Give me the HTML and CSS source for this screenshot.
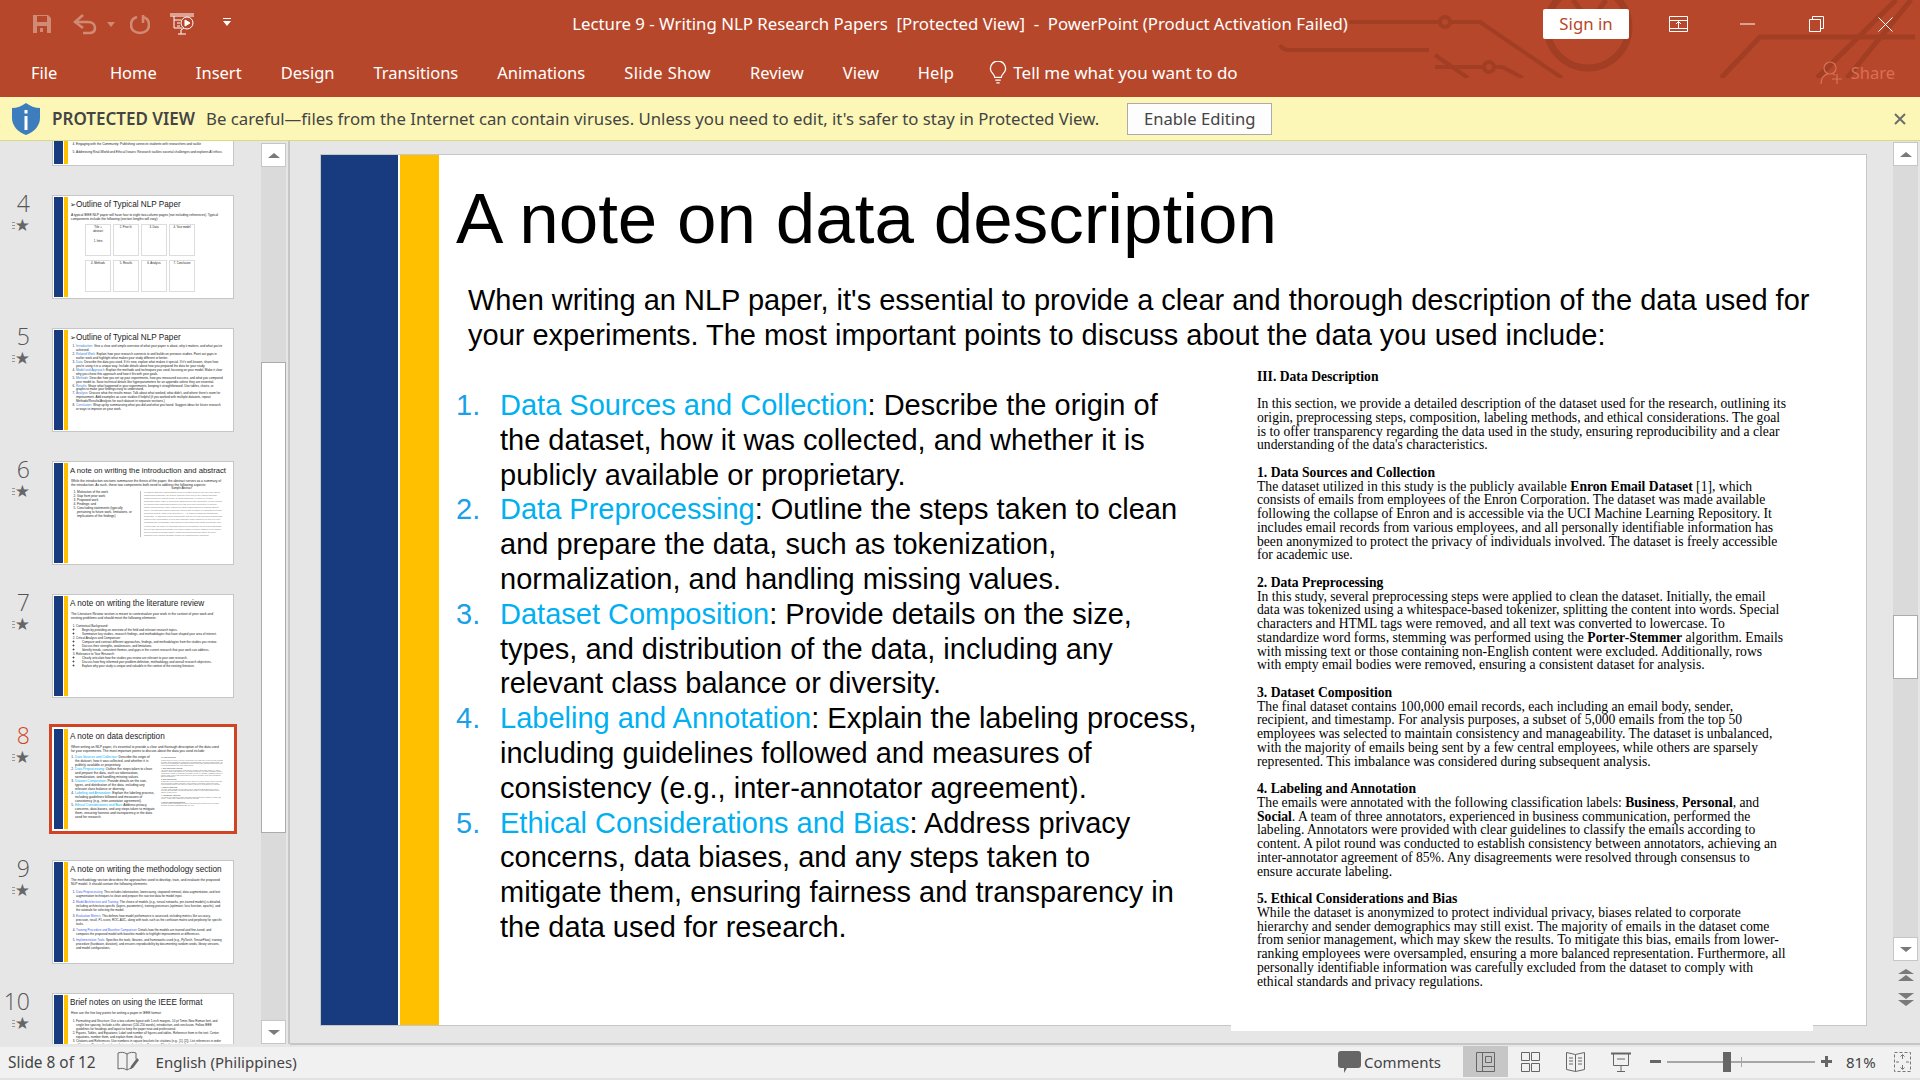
FILE: index.html
```html
<!DOCTYPE html>
<html>
<head>
<meta charset="utf-8">
<title>Lecture 9 - Writing NLP Research Papers</title>
<link rel="stylesheet" href="styles.css">
</head>
<body>
<div class="app">

	<!-- title bar and tabs -->
	<header class="top">
		<svg class="circuit" width="1920" height="78" viewBox="0 0 1920 78" fill="none" stroke="#a13e24" stroke-width="4">
			<path d="M1280 45q3 5 8 5H1429M1349 22H1440M1450 22H1480L1562 78M1435 55L1468 78M1435 67H1484M1494 67H1500q4 0 8 3L1523 78"/>
			<circle cx="1445" cy="22" r="5"/>
			<circle cx="1489" cy="67" r="5"/>
			<circle cx="1588" cy="27" r="41" stroke-width="7"/>
			<path d="M1573 0L1590 22L1606 0M1600 12V22" stroke-width="5"/>
			<path d="M1721 78L1760 37H1915M1817 78L1896 0M1847 78L1911 0" stroke-width="5"/>
		</svg>
		<div class="titlebar">
			<div class="qat">
				<svg class="ico-save" width="20" height="20" viewBox="0 0 20 20"><path d="M1 1H16L19 4V19H1Z" fill="#d08a75"/><path d="M5 2H15V8H5ZM5 12H15V19H5Z" fill="#b7472a"/><path d="M8 14H11V18H8Z" fill="#d08a75"/></svg>
				<svg class="ico-undo" width="24" height="21" viewBox="0 0 24 21" fill="none" stroke="#d08a75" stroke-width="2.6"><path d="M10 1L2 8L10 14"/><path d="M3 8H15C20 8 22 11 22 14C22 17 20 19 16 19H10"/></svg>
				<svg class="ico-drop" width="8" height="5" viewBox="0 0 8 5"><path d="M0 0H8L4 5Z" fill="#d08a75"/></svg>
				<svg class="ico-redo" width="20" height="21" viewBox="0 0 20 21" fill="none" stroke="#d08a75" stroke-width="2.6"><path d="M7 3C3 4 1 7 1 11C1 16 5 19 10 19C15 19 19 16 19 11C19 7 17 4 13 3"/><path d="M13 1V9"/></svg>
				<svg class="ico-show" width="26" height="22" viewBox="0 0 26 22" fill="none" stroke="#fff" stroke-width="1"><path d="M0 1H24M0 3H24" /><path d="M4 3V15H12M4 7H11M7 10H10M7 13H10"/><circle cx="17" cy="10" r="6"/><path d="M15 7L20 10L15 13Z" fill="#fff"/><path d="M11 17V21M8 21H16M11 17L14 15"/></svg>
				<svg class="ico-more" width="8" height="9" viewBox="0 0 8 9"><path d="M0 0H8V1H0ZM0 3H8L4 8Z" fill="#fff"/></svg>
			</div>
			<div class="doc-title">Lecture 9 - Writing NLP Research Papers&nbsp; [Protected View]&nbsp; -&nbsp; PowerPoint (Product Activation Failed)</div>
			<div class="win">
				<button class="signin">Sign in</button>
				<div class="win-btn"><svg width="19" height="16" viewBox="0 0 19 16" fill="none" stroke="#fff"><path d="M.5.5H18.5V15.5H.5ZM.5 4.5H18.5M.5 12.5H18.5M9.5 12V6M7 8L9.5 5.5L12 8"/></svg></div>
				<div class="win-btn"><svg width="15" height="2" viewBox="0 0 15 2"><path d="M0 1H15" stroke="#fff"/></svg></div>
				<div class="win-btn"><svg width="15" height="16" viewBox="0 0 15 16" fill="none" stroke="#fff"><path d="M.5 3.5H11.5V15.5H.5ZM3.5 3.5V.5H14.5V12.5H11.5"/></svg></div>
				<div class="win-btn"><svg width="15" height="15" viewBox="0 0 15 15" fill="none" stroke="#fff"><path d="M.5.5L14.5 14.5M14.5.5L.5 14.5"/></svg></div>
			</div>
		</div>
		<nav class="tabs">
			<span class="tab tab-file">File</span>
			<span class="tab">Home</span>
			<span class="tab">Insert</span>
			<span class="tab">Design</span>
			<span class="tab">Transitions</span>
			<span class="tab">Animations</span>
			<span class="tab tab-show">Slide Show</span>
			<span class="tab">Review</span>
			<span class="tab">View</span>
			<span class="tab">Help</span>
			<span class="tell">
				<svg width="18" height="24" viewBox="0 0 16 22" fill="none" stroke="#fff" stroke-width="1.2"><path d="M5 15C5 12 1 11 1 7A7 7 0 0 1 15 7C15 11 11 12 11 15ZM5.500 17.500H10.500M6.500 20H9.500"/></svg>
				Tell me what you want to do
			</span>
			<span class="share">
				<svg width="23" height="24" viewBox="0 0 23 24" fill="none" stroke="#d4745a" stroke-width="1.2"><circle cx="10" cy="7" r="6"/><path d="M1 23C1 17 4 14 8 13M13 13L15 14M17 13V23M12 18H22"/></svg>
				Share
			</span>
		</nav>
	</header>

	<!-- protected view -->
	<div class="protect">
		<svg width="28" height="32" viewBox="0 0 28 32"><path d="M14 0C18 3 23 5 28 5V15C28 23 22 29 14 32C6 29 0 23 0 15V5C5 5 10 3 14 0Z" fill="#3e7dbd"/><path d="M12.500 13H15.500V27H12.500ZM12.500 7H15.500V10.500H12.500Z" fill="#fff"/></svg>
		<b>PROTECTED VIEW</b>
		<span class="protect-msg">Be careful—files from the Internet can contain viruses. Unless you need to edit, it's safer to stay in Protected View.</span>
		<button class="enable">Enable Editing</button>
		<svg class="protect-x" width="12" height="12" viewBox="0 0 12 12"><path d="M1 1L11 11M11 1L1 11" stroke="#6d6d6d" stroke-width="2"/></svg>
	</div>

	<div class="work">

		<!-- slide thumbnails -->
		<aside class="panel">
			<div class="thumb-list">

				<div class="row">
					<div class="side"></div>
					<div class="thumb"><i class="blue"></i><i class="gold"></i>
						<div class="tbody">
							<ol class="t-list t-plain t-tail" start="4">
								<li>Engaging with the Community: Publishing connects students with researchers and tackle</li>
							</ol>
							<ol class="t-list t-plain t-gap" start="5">
								<li>Addressing Real-World and Ethical Issues: Research tackles societal challenges and explores AI ethics.</li>
							</ol>
						</div>
					</div>
				</div>

				<div class="row">
					<div class="side"><span class="num">4</span><span class="star">★</span></div>
					<div class="thumb"><i class="blue"></i><i class="gold"></i>
						<div class="tbody">
							<h4><span class="arrow">➢</span>Outline of Typical NLP Paper</h4>
							<p class="t-intro">A typical IEEE NLP paper will have four to eight two-column pages (not including references). Typical components include the following (section lengths will vary):</p>
							<div class="pages">
								<div class="page">Title +<br>abstract<br><br><br>1. Intro</div>
								<div class="page">2. Prior lit.</div>
								<div class="page">3. Data</div>
								<div class="page">4. Your model</div>
								<div class="page">4. Methods</div>
								<div class="page">5. Results</div>
								<div class="page">6. Analysis</div>
								<div class="page">7. Conclusion</div>
							</div>
						</div>
					</div>
				</div>

				<div class="row">
					<div class="side"><span class="num">5</span><span class="star">★</span></div>
					<div class="thumb"><i class="blue"></i><i class="gold"></i>
						<div class="tbody">
							<h4><span class="arrow">➢</span>Outline of Typical NLP Paper</h4>
							<ol class="t-list t-tight">
								<li><em>Introduction:</em> Give a clear and simple overview of what your paper is about, why it matters, and what you've achieved.</li>
								<li><em>Related Work:</em> Explain how your research connects to and builds on previous studies. Point out gaps in earlier work and highlight what makes your study different or better.</li>
								<li><em>Data:</em> Describe the data you used. If it's new, explain what makes it special. If it's well-known, share how you're using it in a unique way. Include details about how you prepared the data for your study.</li>
								<li><em>Model and Approach:</em> Explain the methods and techniques you used, focusing on your model. Make it clear why you chose this approach and how it fits with your goals.</li>
								<li><em>Methods:</em> Describe how you set up your experiments, how you measured success, and what you compared your model to. Save technical details like hyperparameters for an appendix unless they are essential.</li>
								<li><em>Results:</em> Share what happened in your experiments, keeping it straightforward. Use tables, charts, or graphs to make your findings easy to understand.</li>
								<li><em>Analysis:</em> Discuss what the results mean. Talk about what worked, what didn't, and where there's room for improvement. Add examples as case studies if helpful (if you worked with multiple datasets, repeat Methods/Results/Analysis for each dataset in separate sections.)</li>
								<li><em>Conclusion:</em> Wrap up by summarizing what you did and what you found. Suggest ideas for future research or ways to improve on your work.</li>
							</ol>
						</div>
					</div>
				</div>

				<div class="row">
					<div class="side"><span class="num">6</span><span class="star">★</span></div>
					<div class="thumb"><i class="blue"></i><i class="gold"></i>
						<div class="tbody">
							<h4 class="t-small">A note on writing the introduction and abstract</h4>
							<p class="t-intro">While the introduction sections summarize the thesis of the paper, the abstract serves as a summary of the introduction. As such, these two components both need to address the following aspects:</p>
							<div class="t-cols">
								<ol class="t-list t-plain t-left">
									<li>Motivation of the work</li>
									<li>Gap from prior work</li>
									<li>Proposed work</li>
									<li>Findings; and</li>
									<li>Concluding statements (typically pertaining to future work, limitations, or implications of the findings)</li>
								</ol>
								<div class="t-abstract">
									<div class="t-abs-head">Sample Abstract</div>
									<p>[1] Natural language understanding involves reading between the lines with implicit background knowledge. [2] Current systems either rely on pre-trained language models as the sole implicit source of world knowledge, or resort to external knowledge bases (KBs) to incorporate additional relevant knowledge. [3] We propose an unsupervised framework based on self-talk as a novel alternative to multiple-choice commonsense tasks. Inspired by inquiry-based discovery learning (Bruner, 1961), our approach inquires language models with a number of information seeking questions such as "what is the definition of ..." to discover additional background knowledge. [4] Empirical results demonstrate that the self-talk procedure substantially improves the performance of zero-shot language model baselines on four out of six commonsense benchmarks, and competes with models that obtain knowledge from external KBs. [5] While our approach improves performance on several benchmarks, the self-talk induced knowledge even when leading to correct answers is not always seen as helpful by human judges, raising interesting questions about the inner-workings of pre-trained language models for commonsense reasoning.</p>
								</div>
							</div>
						</div>
					</div>
				</div>

				<div class="row">
					<div class="side"><span class="num">7</span><span class="star">★</span></div>
					<div class="thumb"><i class="blue"></i><i class="gold"></i>
						<div class="tbody">
							<h4>A note on writing the literature review</h4>
							<p class="t-intro">The Literature Review section is meant to contextualize your work in the context of prior work and existing problems and should meet the following elements:</p>
							<ol class="t-list t-plain t-outer">
								<li>Contextual Background:
									<ul><li>Begin by providing an overview of the field and relevant research topics.</li><li>Summarize key studies, research findings, and methodologies that have shaped your area of interest.</li></ul>
								</li>
								<li>Critical Analysis and Comparison:
									<ul><li>Compare and contrast different approaches, findings, and methodologies from the studies you review.</li><li>Discuss their strengths, weaknesses, and limitations.</li><li>Identify trends, consistent themes, and gaps in the current research that your work can address.</li></ul>
								</li>
								<li>Relevance to Your Research:
									<ul><li>Clearly articulate how the studies you review are relevant to your own research.</li><li>Discuss how they informed your problem definition, methodology, and overall research objectives.</li><li>Explain why your study is unique and valuable in the context of the existing literature.</li></ul>
								</li>
							</ol>
						</div>
					</div>
				</div>

				<div class="row">
					<div class="side"><span class="num num-on">8</span><span class="star">★</span></div>
					<div class="thumb thumb-on"><i class="blue"></i><i class="gold"></i>
						<div class="tbody">
							<h4>A note on data description</h4>
							<p class="t-intro">When writing an NLP paper, it's essential to provide a clear and thorough description of the data used for your experiments. The most important points to discuss about the data you used include:</p>
							<div class="t-cols t-cols8">
								<ol class="t-list t-eight">
									<li><em>Data Sources and Collection:</em> Describe the origin of the dataset, how it was collected, and whether it is publicly available or proprietary.</li>
									<li><em>Data Preprocessing:</em> Outline the steps taken to clean and prepare the data, such as tokenization, normalization, and handling missing values.</li>
									<li><em>Dataset Composition:</em> Provide details on the size, types, and distribution of the data, including any relevant class balance or diversity.</li>
									<li><em>Labeling and Annotation:</em> Explain the labeling process, including guidelines followed and measures of consistency (e.g., inter-annotator agreement).</li>
									<li><em>Ethical Considerations and Bias:</em> Address privacy concerns, data biases, and any steps taken to mitigate them, ensuring fairness and transparency in the data used for research.</li>
								</ol>
								<div class="t-paper">
									<b>III. Data Description</b><br><br>
									In this section, we provide a detailed description of the dataset used for the research, outlining its origin, preprocessing steps, composition, labeling methods, and ethical considerations. The goal is to offer transparency regarding the data used in the study, ensuring reproducibility and a clear understanding of the data's characteristics.<br><br>
									<b>1. Data Sources and Collection</b><br>
									The dataset utilized in this study is the publicly available Enron Email Dataset [1], which consists of emails from employees of the Enron Corporation. The dataset was made available following the collapse of Enron and is accessible via the UCI Machine Learning Repository. It includes email records from various employees, and all personally identifiable information has been anonymized.<br><br>
									<b>2. Data Preprocessing</b><br>
									In this study, several preprocessing steps were applied to clean the dataset. Initially, the email data was tokenized using a whitespace-based tokenizer, splitting the content into words. Special characters and HTML tags were removed, and all text was converted to lowercase.<br><br>
									<b>3. Dataset Composition</b><br>
									The final dataset contains 100,000 email records, each including an email body, sender, recipient, and timestamp. For analysis purposes, a subset of 5,000 emails from the top 50 employees was selected.<br><br>
									<b>4. Labeling and Annotation</b><br>
									The emails were annotated with the following classification labels: Business, Personal, and Social. A team of three annotators performed the labeling.<br><br>
									<b>5. Ethical Considerations and Bias</b><br>
									While the dataset is anonymized to protect individual privacy, biases related to corporate hierarchy and sender demographics may still exist.
								</div>
							</div>
						</div>
					</div>
				</div>

				<div class="row">
					<div class="side"><span class="num">9</span><span class="star">★</span></div>
					<div class="thumb"><i class="blue"></i><i class="gold"></i>
						<div class="tbody">
							<h4>A note on writing the methodology section</h4>
							<p class="t-intro">The methodology section describes the approaches used to develop, train, and evaluate the proposed NLP model. It should contain the following elements:</p>
							<ol class="t-list t-nine">
								<li><em>Data Preprocessing:</em> This includes tokenization, lowercasing, stopword removal, data augmentation, and text augmentation techniques to clean and prepare the raw text data for model input.</li>
								<li><em>Model Architecture and Training:</em> The choice of models (e.g., neural networks, pre-trained models) is detailed, including architecture-specific (layers, parameters), training processes (optimizer, loss function, epochs), and the rationale for selecting the model.</li>
								<li><em>Evaluation Metrics:</em> This defines how model performance is assessed, including metrics like accuracy, precision, recall, F1-score, ROC-AUC, along with tools such as the confusion matrix and perplexity for specific tasks.</li>
								<li><em>Training Procedure and Baseline Comparison:</em> Details how the models are trained and fine-tuned, and compares the proposed model with baseline models to highlight improvements or differences.</li>
								<li><em>Implementation Tools:</em> Specifies the tools, libraries, and frameworks used (e.g., PyTorch, TensorFlow), training procedure (hardware, duration), and ensures reproducibility by documenting random seeds, library versions, and model configurations.</li>
							</ol>
						</div>
					</div>
				</div>

				<div class="row">
					<div class="side"><span class="num">10</span><span class="star">★</span></div>
					<div class="thumb"><i class="blue"></i><i class="gold"></i>
						<div class="tbody">
							<h4>Brief notes on using the IEEE format</h4>
							<p class="t-intro">Here are the five key points for writing a paper in IEEE format:</p>
							<ol class="t-list t-plain t-outer">
								<li>Formatting and Structure: Use a two-column layout with 1-inch margins, 10 pt Times New Roman font, and single line spacing. Include a title, abstract (150-250 words), introduction, and conclusion. Follow IEEE guidelines for headings and layout to keep the paper neat and professional.</li>
								<li>Figures, Tables, and Equations: Label and number all figures and tables. Reference them in the text. Center equations, number them, and explain them clearly.</li>
								<li>Citations and References: Use numbers in square brackets for citations (e.g., [1], [2]). List references in order of first use. Review the style guide to avoid mistakes. If you use AI tools, mention them in the acknowledgements.</li>
							</ol>
						</div>
					</div>
				</div>

			</div>
			<div class="scroll scroll-left">
				<div class="sbtn"><span class="tri-up"></span></div>
				<div class="strack"><div class="sthumb"></div></div>
				<div class="sbtn"><span class="tri-down"></span></div>
			</div>
		</aside>

		<!-- current slide -->
		<main class="editor">
			<section class="slide">
				<div class="band-blue"></div>
				<div class="band-gold"></div>
				<div class="slide-main">
					<h1>A note on data description</h1>
					<p class="intro">When writing an NLP paper, it's essential to provide a clear and thorough description of the data used for your experiments. The most important points to discuss about the data you used include:</p>
					<div class="columns">
						<ol class="points">
							<li><div><span class="hl">Data Sources and Collection</span>: Describe the origin of the dataset, how it was collected, and whether it is publicly available or proprietary.</div></li>
							<li><div><span class="hl">Data Preprocessing</span>: Outline the steps taken to clean and prepare the data, such as tokenization, normalization, and handling missing values.</div></li>
							<li><div><span class="hl">Dataset Composition</span>: Provide details on the size, types, and distribution of the data, including any relevant class balance or diversity.</div></li>
							<li><div><span class="hl">Labeling and Annotation</span>: Explain the labeling process, including guidelines followed and measures of consistency (e.g., inter-annotator agreement).</div></li>
							<li><div><span class="hl">Ethical Considerations and Bias</span>: Address privacy concerns, data biases, and any steps taken to<br>mitigate them, ensuring fairness and transparency in the data used for research.</div></li>
						</ol>
						<div class="paper">
<b>III. Data Description</b><br>
<br>
In this section, we provide a detailed description of the dataset used for the research, outlining its<br>
origin, preprocessing steps, composition, labeling methods, and ethical considerations. The goal<br>
is to offer transparency regarding the data used in the study, ensuring reproducibility and a clear<br>
understanding of the data's characteristics.<br>
<br>
<b>1. Data Sources and Collection</b><br>
The dataset utilized in this study is the publicly available <b>Enron Email Dataset</b> [1], which<br>
consists of emails from employees of the Enron Corporation. The dataset was made available<br>
following the collapse of Enron and is accessible via the UCI Machine Learning Repository. It<br>
includes email records from various employees, and all personally identifiable information has<br>
been anonymized to protect the privacy of individuals involved. The dataset is freely accessible<br>
for academic use.<br>
<br>
<b>2. Data Preprocessing</b><br>
In this study, several preprocessing steps were applied to clean the dataset. Initially, the email<br>
data was tokenized using a whitespace-based tokenizer, splitting the content into words. Special<br>
characters and HTML tags were removed, and all text was converted to lowercase. To<br>
standardize word forms, stemming was performed using the <b>Porter-Stemmer</b> algorithm. Emails<br>
with missing text or those containing non-English content were excluded. Additionally, rows<br>
with empty email bodies were removed, ensuring a consistent dataset for analysis.<br>
<br>
<b>3. Dataset Composition</b><br>
The final dataset contains 100,000 email records, each including an email body, sender,<br>
recipient, and timestamp. For analysis purposes, a subset of 5,000 emails from the top 50<br>
employees was selected to maintain consistency and manageability. The dataset is unbalanced,<br>
with the majority of emails being sent by a few central employees, while others are sparsely<br>
represented. This imbalance was considered during subsequent analysis.<br>
<br>
<b>4. Labeling and Annotation</b><br>
The emails were annotated with the following classification labels: <b>Business</b>, <b>Personal</b>, and<br>
<b>Social</b>. A team of three annotators, experienced in business communication, performed the<br>
labeling. Annotators were provided with clear guidelines to classify the emails according to<br>
content. A pilot round was conducted to establish consistency between annotators, achieving an<br>
inter-annotator agreement of 85%. Any disagreements were resolved through consensus to<br>
ensure accurate labeling.<br>
<br>
<b>5. Ethical Considerations and Bias</b><br>
While the dataset is anonymized to protect individual privacy, biases related to corporate<br>
hierarchy and sender demographics may still exist. The majority of emails in the dataset come<br>
from senior management, which may skew the results. To mitigate this bias, emails from lower-<br>
ranking employees were oversampled, ensuring a more balanced representation. Furthermore, all<br>
personally identifiable information was carefully excluded from the dataset to comply with<br>
ethical standards and privacy regulations.
						</div>
					</div>
				</div>
			</section>
			<div class="scroll scroll-right">
				<div class="sbtn"><span class="tri-up"></span></div>
				<div class="strack"><div class="sthumb"></div></div>
				<div class="sbtn"><span class="tri-down"></span></div>
				<div class="jump">
					<svg width="16" height="14" viewBox="0 0 16 14"><path d="M8 0L16 5H0ZM8 6L16 12H0Z" fill="#7a7a7a"/></svg>
					<svg width="16" height="14" viewBox="0 0 16 14"><path d="M0 0H16L8 6ZM0 7H16L8 13Z" fill="#7a7a7a"/></svg>
				</div>
			</div>
		</main>
	</div>

	<!-- status bar -->
	<footer class="status">
		<span class="st-slide">Slide 8 of 12</span>
		<svg class="st-notes" width="22" height="22" viewBox="0 0 22 22" fill="none" stroke="#666"><path d="M1 2C4 1 7 1 10 3V19C7 17 4 17 1 18ZM10 3C13 1 16 1 19 2V8M10 19C12 18 14 17 15 17"/><path d="M14 15L20 7L22 9L16 17L13 18Z" fill="#666" stroke="none"/></svg>
		<span class="st-lang">English (Philippines)</span>
		<span class="st-comments">
			<svg width="23" height="23" viewBox="0 0 23 23"><path d="M3 1H20Q23 1 23 4V15Q23 18 20 18H9L6 23V18H3Q0 18 0 15V4Q0 1 3 1Z" fill="#666"/></svg>
			Comments
		</span>
		<span class="view view-on"><svg width="19" height="20" viewBox="0 0 19 20" fill="none" stroke="#666"><path d="M.5.5H18.5V19.500H.5ZM6.500.5V19.500M6.500 14.500H18.500M9.500 4.500H15.500V10.500H9.500Z"/></svg></span>
		<span class="view"><svg width="19" height="20" viewBox="0 0 19 20" fill="none" stroke="#666"><path d="M.5.5H8.500V8.500H.5ZM10.500.5H18.500V8.500H10.500ZM.5 11.500H8.500V19.500H.5ZM10.500 11.500H18.500V19.500H10.500Z"/></svg></span>
		<span class="view"><svg width="19" height="20" viewBox="0 0 19 20" fill="none" stroke="#666"><path d="M.5.5L9.500 2.500L18.500.5V17.500L9.500 19.500L.5 17.500ZM9.500 2.500V19.500M3 6H7M3 9H7M3 12H7M12 6H16M12 9H16M12 12H16"/></svg></span>
		<span class="view"><svg width="20" height="20" viewBox="0 0 20 20" fill="none" stroke="#666"><path d="M0 1.500H20" stroke-width="2"/><path d="M2.500 2V13.500H17.500V2M6 7H14M10 14V19M6 19.500H14"/></svg></span>
		<span class="zoom-minus"></span>
		<span class="slider"><span class="slider-tick"></span><span class="slider-knob"></span></span>
		<span class="zoom-plus"></span>
		<span class="st-zoom">81%</span>
		<svg class="st-fit" width="17" height="20" viewBox="0 0 17 20" fill="none" stroke="#777"><path d="M.5.5H16.500V19.500H.5Z" stroke-dasharray="3 2"/><path d="M8.500 3V7M6.500 4.500L8.500 2.500L10.500 4.500M8.500 13V17M6.500 15.500L8.500 17.500L10.500 15.500M2 10H5M12 10H15"/></svg>
	</footer>
</div>
</body>
</html>
```

FILE: styles.css
```css
html, body {
	margin: 0;
	height: 100%;
	overflow: hidden;
}
body {
	font-family: "Noto Sans", "Open Sans", sans-serif;
	background: #e6e6e6;
}
.app {
	width: 1920px;
	height: 1080px;
	display: flex;
	flex-direction: column;
}
button {
	font-family: inherit;
}

/* title bar */
.top {
	position: relative;
	height: 97px;
	flex: none;
	background: #b7472a;
	color: #fff;
}
.circuit {
	position: absolute;
	left: 0;
	top: 0;
}
.titlebar {
	position: relative;
	height: 48px;
	display: flex;
	align-items: center;
}
.qat {
	width: 400px;
	display: flex;
	align-items: center;
	padding-left: 32px;
	box-sizing: border-box;
}
.ico-undo { margin-left: 21px; }
.ico-drop { margin-left: 10px; }
.ico-redo { margin-left: 15px; }
.ico-show { margin-left: 20px; }
.ico-more { margin-left: 27px; margin-top: -3px; }
.doc-title {
	width: 1120px;
	text-align: center;
	font-size: 16.800px;
	white-space: nowrap;
	margin-top: -1px;
}
.win {
	display: flex;
	align-items: center;
	margin-left: 23px;
}
.signin {
	width: 86px;
	height: 30px;
	border: 0;
	border-radius: 2px;
	background: #fff;
	color: #b7472a;
	font-size: 16.800px;
	padding: 0 0 2px;
}
.win-btn {
	width: 69px;
	display: flex;
	justify-content: center;
}
.win-btn:first-of-type { margin-left: 15px; }

/* tabs */
.tabs {
	position: relative;
	height: 49px;
	display: flex;
	align-items: center;
	font-size: 16.500px;
	padding: 0 25px 0 12px;
}
.tab {
	padding: 0 19.500px;
}
.tab-file {
	padding-left: 19px;
	padding-right: 33px;
}
.tab-show {
	letter-spacing: .35px;
}
.tell {
	display: flex;
	align-items: center;
	gap: 6px;
	margin-left: 16px;
	font-size: 17px;
}
.share {
	display: flex;
	align-items: center;
	gap: 8px;
	margin-left: auto;
	color: #dc6f56;
}

/* protected view bar */
.protect {
	height: 43px;
	flex: none;
	background: #fcf7b6;
	border-bottom: 1px solid #d8d98a;
	display: flex;
	align-items: center;
	padding-left: 12px;
	color: #444;
	font-size: 16.750px;
	white-space: nowrap;
}
.protect b {
	font-weight: 600;
	font-size: 17px;
	margin-left: 12px;
}
.protect-msg {
	margin-left: 11px;
}
.enable {
	width: 145px;
	height: 32px;
	margin-left: 28px;
	background: #fdfdfd;
	border: 1px solid #ababab;
	color: #444;
	font-size: 16.600px;
	padding: 0;
}
.protect-x {
	margin-left: auto;
	margin-right: 14px;
}

/* work area */
.work {
	flex: 1;
	display: flex;
	min-height: 0;
}
.panel {
	width: 290px;
	flex: none;
	display: flex;
	box-sizing: border-box;
	border-right: 2px solid #c6c6c6;
	margin-bottom: 3px;
	overflow: hidden;
}
.thumb-list {
	width: 261px;
	flex: none;
	height: 100%;
	overflow: hidden;
	padding-top: 1px;
	box-sizing: border-box;
}
.row {
	height: 133px;
	display: flex;
}
.row:first-child {
	margin-top: -80px;
}
.side {
	width: 52px;
	flex: none;
	display: flex;
	flex-direction: column;
	align-items: flex-end;
	padding-right: 22px;
	box-sizing: border-box;
	color: #555;
}
.num {
	font-size: 23px;
	font-weight: 300;
	line-height: 30px;
	margin-top: -7px;
	font-family: "Open Sans", sans-serif;
}
.num-on {
	color: #d04423;
}
.star {
	display: flex;
	align-items: center;
	font-family: "DejaVu Sans", sans-serif;
	font-size: 17px;
	line-height: 16px;
	margin-top: -1px;
	color: #666;
}
.star::before {
	content: "";
	width: 3px;
	height: 7px;
	background: repeating-linear-gradient(#999 0 1px, transparent 1px 3px);
}

/* thumbnail slide */
.thumb {
	width: 182px;
	height: 104px;
	box-sizing: border-box;
	border: 1px solid #c6c6c6;
	background: #fff;
	padding: 1px;
	display: flex;
	overflow: hidden;
	color: #222;
	font-family: "Liberation Sans", sans-serif;
}
.thumb-on {
	outline: 3px solid #d04423;
	border-color: #fff;
}
.blue {
	width: 9px;
	flex: none;
	background: #183a7e;
}
.gold {
	width: 4px;
	margin-left: 1px;
	flex: none;
	background: #ffc000;
}
.tbody {
	flex: 1;
	min-width: 0;
	padding: 0 9px 0 2px;
}
.tbody h4 {
	margin: 3px 0 0;
	font-size: 8.200px;
	line-height: 10px;
	font-weight: normal;
	white-space: nowrap;
}
.tbody h4.t-small {
	font-size: 7.700px;
}
.arrow {
	font-family: "DejaVu Sans", sans-serif;
	font-size: 7px;
}
.t-intro {
	margin: 3px 0 0 1px;
	font-size: 3.300px;
	line-height: 4px;
}
.t-list {
	margin: 4px 0 0;
	padding-left: 6px;
	font-size: 3.200px;
	line-height: 4px;
}
.t-list em {
	font-style: normal;
	color: #2f80d8;
}
.t-tail { margin-top: 78px; }
.t-gap { margin-top: 4px; }
.t-tight {
	font-size: 3.100px;
	line-height: 3.950px;
	margin-top: 2px;
}
.pages {
	display: grid;
	grid-template-columns: repeat(4, 26px);
	grid-template-rows: repeat(2, 32px);
	gap: 4px 2px;
	margin: 3px 0 0 15px;
}
.page {
	border: 1px solid #ddd;
	font-size: 2.800px;
	line-height: 3.600px;
	text-align: center;
	padding-top: 1px;
	box-sizing: border-box;
}
.t-cols {
	display: flex;
	gap: 4px;
}
.t-left {
	width: 66px;
	flex: none;
	margin-top: 3px;
	padding-left: 7px;
	box-sizing: border-box;
}
.t-abstract {
	flex: 1;
	font-size: 2.100px;
	line-height: 3.050px;
	color: #777;
	min-width: 0;
}
.t-abstract p {
	margin: 1px 0 0;
	border-left: 1px solid #bbb;
	padding-left: 3px;
}
.t-abs-head {
	font-size: 2.800px;
	line-height: 3px;
	text-align: center;
	color: #222;
}
.t-outer {
	font-size: 3px;
	line-height: 4px;
}
.t-outer ul {
	margin: 0;
	padding-left: 6px;
	list-style: circle;
}
.t-cols8 {
	gap: 6px;
}
.t-eight {
	width: 85px;
	flex: none;
	margin-top: 2px;
	padding-left: 5px;
	box-sizing: border-box;
	font-size: 3.300px;
}
.t-eight em {
	color: #00b0f0;
}
.t-paper {
	flex: 1;
	min-width: 0;
	font-family: "Liberation Serif", serif;
	font-size: 1.650px;
	line-height: 1.600px;
	margin-top: 4px;
	color: #555;
}
.t-nine {
	line-height: 4px;
	font-size: 3px;
}
.t-nine li {
	margin-bottom: 2px;
}
.t-nine em {
	color: #3a5cf0;
}

/* scroll bars */
.scroll {
	width: 25px;
	flex: none;
	display: flex;
	flex-direction: column;
}
.scroll-left {
	padding-top: 2px;
}
.sbtn {
	height: 24px;
	flex: none;
	box-sizing: border-box;
	background: #fff;
	border: 1px solid #c6c6c6;
	display: flex;
	align-items: center;
	justify-content: center;
}
.tri-up, .tri-down {
	width: 0;
	height: 0;
	border-left: 6px solid transparent;
	border-right: 6px solid transparent;
}
.tri-up { border-bottom: 5px solid #7a7a7a; }
.tri-down { border-top: 5px solid #7a7a7a; }
.strack {
	flex: 1;
	background: #dadada;
}
.sthumb {
	box-sizing: border-box;
	background: #fff;
	border: 1px solid #ababab;
}
.scroll-left .sthumb {
	height: 471px;
	margin-top: 195px;
}
.scroll-right {
	margin-left: 26px;
	padding-top: 1px;
}
.scroll-right .sthumb {
	height: 64px;
	margin-top: 449px;
}
.jump {
	height: 82px;
	flex: none;
	display: flex;
	flex-direction: column;
	align-items: center;
	gap: 10px;
	padding-top: 8px;
	box-sizing: border-box;
}

/* the big slide */
.editor {
	flex: 1;
	min-width: 0;
	display: flex;
	padding-left: 30px;
	box-sizing: border-box;
	border-bottom: 2px solid #c6c6c6;
	margin-bottom: 2px;
}
.slide {
	width: 1547px;
	height: 872px;
	flex: none;
	margin-top: 13px;
	box-sizing: border-box;
	border: 1px solid #c6c6c6;
	background: #fff;
	display: flex;
	font-family: "Liberation Sans", sans-serif;
	color: #000;
}
.band-blue {
	width: 77px;
	flex: none;
	background: #183a7e;
}
.band-gold {
	width: 39px;
	margin-left: 2px;
	flex: none;
	background: #ffc000;
}
.slide-main {
	flex: 1;
	min-width: 0;
	padding-left: 17px;
}
.slide-main h1 {
	margin: 24px 0 0;
	font-size: 71px;
	line-height: 80px;
	font-weight: normal;
	white-space: nowrap;
}
.intro {
	margin: 24px 0 0 12px;
	width: 1370px;
	font-size: 29px;
	line-height: 34.800px;
}
.columns {
	display: flex;
}
.points {
	list-style: none;
	counter-reset: pt;
	width: 745px;
	flex: none;
	margin: 35.500px 30px 0 0;
	padding: 0;
	font-size: 29px;
	line-height: 34.800px;
}
.points li {
	counter-increment: pt;
	display: grid;
	grid-template-columns: 44px 1fr;
}
.points li::before {
	content: counter(pt) ".";
	color: #1a9fe8;
}
.hl {
	color: #00b0f0;
}
.paper {
	position: relative;
	width: 582px;
	height: 678px;
	flex: none;
	box-sizing: border-box;
	background: #fff;
	padding: 17px 0 0 26px;
	font-family: "Liberation Serif", serif;
	font-size: 13.630px;
	line-height: 13.750px;
	white-space: nowrap;
}

/* status bar */
.status {
	height: 33px;
	flex: none;
	background: #f1f1f1;
	display: flex;
	align-items: center;
	color: #444;
	font-size: 15px;
	position: relative;
	white-space: nowrap;
	padding-bottom: 2px;
	box-sizing: border-box;
	border-bottom: 2px solid #e2e2e2;
}
.st-slide {
	margin-left: 8px;
	font-size: 15.400px;
	margin-top: 1px;
}
.st-notes { margin-left: 21px; }
.st-lang { margin-left: 17px; }
.st-comments {
	display: flex;
	align-items: center;
	gap: 3px;
	margin-left: auto;
}
.view {
	width: 45px;
	height: 31px;
	display: flex;
	align-items: center;
	justify-content: center;
}
.view-on {
	background: #c6c6c6;
	margin-left: 22px;
}
.zoom-minus, .zoom-plus {
	position: relative;
	width: 11px;
	height: 3px;
	background: #666;
}
.zoom-minus { margin-left: 7px; }
.zoom-plus::after {
	content: "";
	position: absolute;
	left: 4px;
	top: -4px;
	width: 3px;
	height: 11px;
	background: #666;
}
.slider {
	position: relative;
	width: 148px;
	height: 2px;
	background: #a6a6a6;
	margin: 0 6px;
}
.slider-knob {
	position: absolute;
	left: 56px;
	top: -9px;
	width: 8px;
	height: 20px;
	background: #666;
}
.slider-tick {
	position: absolute;
	left: 74px;
	top: -4px;
	width: 1px;
	height: 10px;
	background: #a6a6a6;
}
.st-zoom {
	margin-left: 14px;
	width: 48px;
}
.st-fit {
	margin-right: 9px;
}
```
